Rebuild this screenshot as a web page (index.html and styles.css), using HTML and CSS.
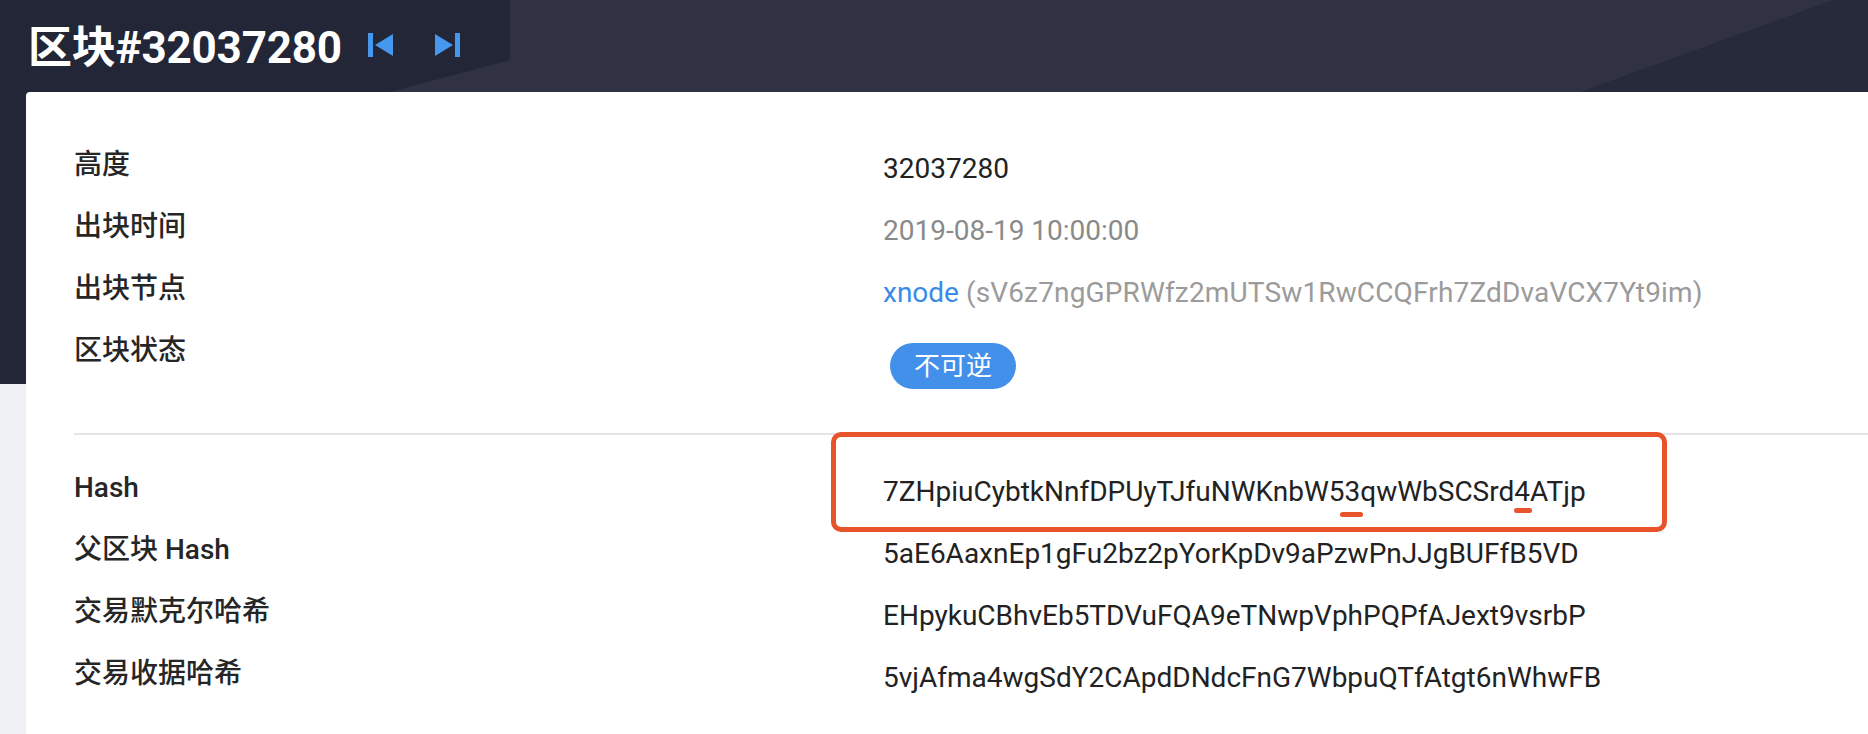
FILE: index.html
```html
<!DOCTYPE html>
<html lang="zh-CN">
<head>
  <meta charset="UTF-8">
  <meta name="viewport" content="width=device-width, initial-scale=1.0">
  <title>区块#32037280</title>
  <link rel="stylesheet" href="styles.css">
</head>
<body>
  <div class="page">
    <!-- Header -->
    <header class="hero">
      <h1 class="hero-title">区块#32037280</h1>
      <nav class="hero-nav">
        <a class="nav-btn nav-prev" href="#" title="上一个区块">
          <svg width="25" height="24" viewBox="0 0 25 24"><rect x="0" y="0" width="5" height="24"/><polygon points="25,1 7,12 25,23"/></svg>
        </a>
        <a class="nav-btn nav-next" href="#" title="下一个区块">
          <svg width="25" height="24" viewBox="0 0 25 24"><polygon points="0,1 18,12 0,23"/><rect x="20" y="0" width="5" height="24"/></svg>
        </a>
      </nav>
    </header>

    <!-- Block details -->
    <main class="card">
      <section class="detail-group">
        <div class="row">
          <div class="row-label">高度</div>
          <div class="row-value">32037280</div>
        </div>
        <div class="row">
          <div class="row-label">出块时间</div>
          <div class="row-value muted">2019-08-19 10:00:00</div>
        </div>
        <div class="row">
          <div class="row-label">出块节点</div>
          <div class="row-value"><a class="node-link" href="#">xnode</a> <span class="muted-light">(sV6z7ngGPRWfz2mUTSw1RwCCQFrh7ZdDvaVCX7Yt9im)</span></div>
        </div>
        <div class="row">
          <div class="row-label">区块状态</div>
          <div class="row-value"><span class="badge">不可逆</span></div>
        </div>
      </section>

      <section class="detail-group detail-group-hashes">
        <div class="row">
          <div class="row-label">Hash</div>
          <div class="row-value hash-value">
            <span class="mark-box"></span>7ZHpiuCybtkNnfDPUyTJfuNWKnbW5<span class="mark-char">3</span>qwWbSCSrd<span class="mark-char mark-char-high">4</span>ATjp
          </div>
        </div>
        <div class="row">
          <div class="row-label">父区块 Hash</div>
          <div class="row-value">5aE6AaxnEp1gFu2bz2pYorKpDv9aPzwPnJJgBUFfB5VD</div>
        </div>
        <div class="row">
          <div class="row-label">交易默克尔哈希</div>
          <div class="row-value">EHpykuCBhvEb5TDVuFQA9eTNwpVphPQPfAJext9vsrbP</div>
        </div>
        <div class="row">
          <div class="row-label">交易收据哈希</div>
          <div class="row-value">5vjAfma4wgSdY2CApdDNdcFnG7WbpuQTfAtgt6nWhwFB</div>
        </div>
      </section>
    </main>
  </div>
</body>
</html>
```

FILE: styles.css
```css
* {
  margin: 0;
  padding: 0;
  box-sizing: border-box;
}

body {
  font-family: Roboto, "Noto Sans CJK SC", sans-serif;
  color: #222222;
  background: #eff0f4;
  overflow: hidden;
}

.page {
  position: relative;
  min-height: 100vh;
  background: linear-gradient(to bottom, #303244 0, #303244 384px, #eff0f4 384px);
  display: flex;
  flex-direction: column;
}

/* decorative shapes in the dark band */
.page::before {
  content: "";
  position: absolute;
  top: 0;
  left: 0;
  width: 510px;
  height: 384px;
  background: #222637;
  clip-path: polygon(0 0, 510px 0, 510px 60px, 390px 92px, 390px 384px, 0 384px);
}

.page::after {
  content: "";
  position: absolute;
  top: 0;
  right: 0;
  width: 288px;
  height: 92px;
  background: #262a3b;
  clip-path: polygon(253px 0, 288px 0, 288px 92px, 0 92px);
}

.hero {
  position: relative;
  z-index: 1;
  height: 92px;
  padding: 0 0 4px 28px;
  display: flex;
  align-items: center;
}

.hero-title {
  font-size: 44px;
  font-weight: 700;
  color: #ffffff;
  letter-spacing: -0.2px;
}

.hero-nav {
  display: flex;
  gap: 42px;
  margin-left: 26px;
  padding-top: 2px;
}

.nav-btn {
  display: block;
  width: 25px;
  height: 24px;
}

.nav-btn svg {
  display: block;
  fill: #4697ee;
}

.card {
  position: relative;
  z-index: 1;
  flex: 1;
  margin-left: 26px;
  background: #ffffff;
  border-top-left-radius: 4px;
  padding: 42px 0 0 48px;
}

.detail-group {
  padding-bottom: 44px;
}

.detail-group-hashes {
  border-top: 2px solid #e3e4e8;
  padding-top: 22px;
}

.row {
  display: flex;
  align-items: flex-start;
  min-height: 62px;
}

.row-label {
  flex: none;
  width: 809px;
  font-size: 28px;
  font-weight: 500;
  line-height: 62px;
  color: #262626;
}

.row-value {
  position: relative;
  font-size: 28px;
  line-height: 54px;
  padding-top: 8px;
  white-space: nowrap;
}

.muted {
  color: #8a8a8a;
}

.muted-light {
  color: #9b9b9b;
  letter-spacing: 0.15px;
}

.node-link {
  color: #3a8be6;
  text-decoration: none;
}

.badge {
  display: inline-block;
  margin: 15px 0 0 7px;
  height: 46px;
  padding: 0 24px;
  border-radius: 23px;
  background: #4290ea;
  color: #ffffff;
  font-size: 26px;
  line-height: 46px;
  vertical-align: top;
}

/* red annotation over the hash */
.mark-box {
  position: absolute;
  top: -25px;
  left: -52px;
  width: 836px;
  height: 100px;
  border: 5px solid #e9532b;
  border-radius: 10px;
  pointer-events: none;
}

.mark-char {
  position: relative;
}

.mark-char::after {
  content: "";
  position: absolute;
  left: 50%;
  top: calc(100% + 4px);
  width: 23px;
  height: 5px;
  margin-left: -12px;
  border-radius: 3px;
  background: #e9532b;
}

.mark-char-high::after {
  top: 100%;
  width: 18px;
  margin-left: -8px;
}
```
